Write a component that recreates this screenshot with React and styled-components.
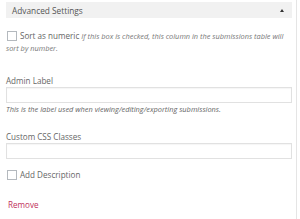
import React from 'react';
import styled, { createGlobalStyle } from 'styled-components';

const Global = createGlobalStyle`
  html, body { margin: 0; padding: 0; background: #fff; }
  body { font-family: "Open Sans", "Liberation Sans", sans-serif; color: #555; }
`;

const Panel = styled.div`
  width: 297px;
  height: 219px;
  box-sizing: border-box;
  border-right: 1px solid #e5e5e5;
  padding: 2px 4px 0 6px;
  overflow: hidden;
`;

const Header = styled.div`
  display: flex;
  align-items: center;
  justify-content: space-between;
  height: 16px;
  background: #f1f1f1;
  padding: 0 8px 0 6px;
  font-size: 8.3px;
  color: #555;
`;

const Arrow = styled.span`
  width: 0;
  height: 0;
  border-left: 2.5px solid transparent;
  border-right: 2.5px solid transparent;
  border-bottom: 3px solid #333;
`;

const CheckRow = styled.label`
  display: block;
  margin-top: ${({ $top }) => $top}px;
  font-size: 8.1px;
  line-height: 11px;
  color: #666;
`;

const Box = styled.span`
  display: inline-block;
  width: 10px;
  height: 10px;
  box-sizing: border-box;
  border: 1px solid #b4b9be;
  background: #fff;
  vertical-align: -2px;
  margin: 0 3px 0 1px;
`;

const Help = styled.em`
  font-size: 7.4px;
  line-height: 11px;
  color: #777;
`;

const Field = styled.div`
  margin-top: ${({ $top }) => $top}px;
`;

const Label = styled.div`
  font-size: 8.1px;
  line-height: 11px;
  color: #666;
  margin-bottom: 1px;
`;

const Input = styled.div`
  height: 16px;
  box-sizing: border-box;
  border: 1px solid #e1e1e1;
  box-shadow: inset 0 1px 1px rgba(0, 0, 0, 0.04);
  width: 286px;
`;

const Note = styled.div`
  font-size: 7.4px;
  line-height: 10px;
  font-style: italic;
  color: #666;
  margin-top: 1px;
`;

const Remove = styled.a`
  display: block;
  margin-top: ${({ $top }) => $top}px;
  margin-left: 2px;
  font-size: 8.1px;
  line-height: 11px;
  color: #c0305b;
  text-decoration: none;
`;

export default function App() {
  return (
    <>
      <Global />
      <Panel>
        <Header>
          <span>Advanced Settings</span>
          <Arrow />
        </Header>
        <CheckRow $top={12}>
          <Box />
          Sort as numeric <Help>If this box is checked, this column in the submissions table will sort by number.</Help>
        </CheckRow>
        <Field $top={21}>
          <Label>Admin Label</Label>
          <Input />
          <Note>This is the label used when viewing/editing/exporting submissions.</Note>
        </Field>
        <Field $top={17}>
          <Label>Custom CSS Classes</Label>
          <Input />
        </Field>
        <CheckRow $top={10}>
          <Box />
          Add Description
        </CheckRow>
        <Remove $top={19} href="#">Remove</Remove>
      </Panel>
    </>
  );
}
